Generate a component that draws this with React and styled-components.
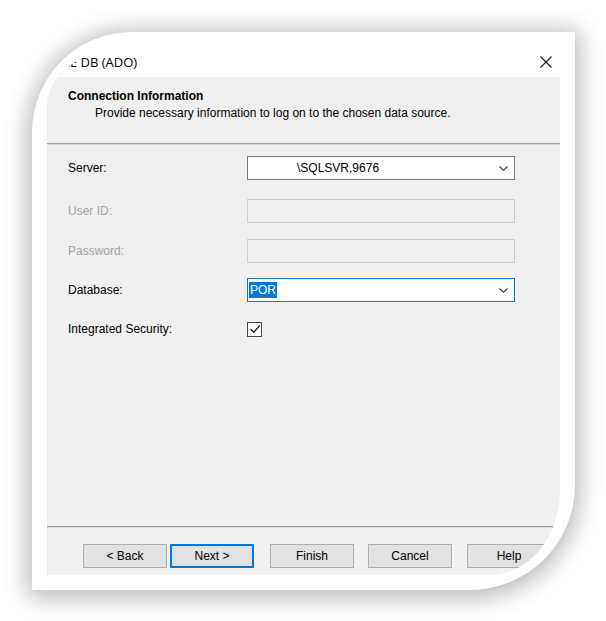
import React from 'react';
import styled, { createGlobalStyle } from 'styled-components';

const GlobalStyle = createGlobalStyle`
  html, body {
    margin: 0;
    padding: 0;
    background: #ffffff;
  }
  body {
    width: 606px;
    height: 621px;
    overflow: hidden;
    font-family: "Liberation Sans", Arial, sans-serif;
  }
`;

const App = () => {
  return (
    <>
      <GlobalStyle />
      <Frame>
        <Dialog>
          <TitleBar>
            <TitleText>OLE DB (ADO)</TitleText>
            <CloseIcon viewBox="0 0 12 12">
              <path d="M0.5 0.5 L11.5 11.5 M11.5 0.5 L0.5 11.5" stroke="#1a1a1a" strokeWidth="1.1" fill="none" />
            </CloseIcon>
          </TitleBar>

          {/* Wizard page header */}
          <Header>
            <HeaderTitle>Connection Information</HeaderTitle>
            <HeaderText>Provide necessary information to log on to the chosen data source.</HeaderText>
          </Header>
          <Separator />

          <Body>
            <Row gap={11}>
              <Label>Server:</Label>
              <Combo>
                <ComboValue indent={49}>\SQLSVR,9676</ComboValue>
                <Chevron />
              </Combo>
            </Row>
            <Row gap={19}>
              <Label disabled>User ID:</Label>
              <DisabledInput />
            </Row>
            <Row gap={16}>
              <Label disabled>Password:</Label>
              <DisabledInput />
            </Row>
            <Row gap={15}>
              <Label>Database:</Label>
              <Combo focused>
                <ComboValue indent={1}>
                  <Selected>POR</Selected>
                </ComboValue>
                <Chevron />
              </Combo>
            </Row>
            <Row gap={15}>
              <Label>Integrated Security:</Label>
              <CheckBox>
                <svg width="12" height="12" viewBox="0 0 12 12">
                  <path d="M1.5 6 L4.8 9.3 L10.8 2.5" stroke="#222" strokeWidth="1.3" fill="none" />
                </svg>
              </CheckBox>
            </Row>
          </Body>

          <Separator />
          <ButtonBar>
            <Button>&lt; Back</Button>
            <Button primary space={3}>Next &gt;</Button>
            <Button space={16}>Finish</Button>
            <Button space={14}>Cancel</Button>
            <Button space={15}>Help</Button>
          </ButtonBar>
        </Dialog>
      </Frame>
    </>
  );
};

const Chevron = () => (
  <ChevronIcon viewBox="0 0 9 5">
    <path d="M0.5 0.5 L4.5 4.3 L8.5 0.5" stroke="#333" strokeWidth="1.1" fill="none" />
  </ChevronIcon>
);

// Styled Components
const Frame = styled.div`
  box-sizing: border-box;
  width: 543px;
  height: 558px;
  margin: 32px 0 0 32px;
  padding: 13px 15px 15px 15px;
  display: flex;
  background: #ffffff;
  border-radius: 100px 0 105px 0;
  box-shadow: 0 3px 24px 4px rgba(0, 0, 0, 0.3);
`;

const Dialog = styled.div`
  flex: 1;
  display: flex;
  flex-direction: column;
  overflow: hidden;
  background: #f0f0f0;
  border-top-left-radius: 95px 60px;
  border-bottom-right-radius: 70px 85px;
`;

const TitleBar = styled.div`
  height: 32px;
  flex-shrink: 0;
  display: flex;
  align-items: center;
  justify-content: space-between;
  padding: 0 8px 0 6px;
  background: #ffffff;
`;

const TitleText = styled.span`
  font-family: "Open Sans", "Noto Sans", sans-serif;
  font-size: 13px;
  color: #000;
  padding-top: 2px;
`;

const CloseIcon = styled.svg`
  width: 12px;
  height: 12px;
  margin-top: 2px;
`;

const Header = styled.div`
  height: 66px;
  flex-shrink: 0;
  box-sizing: border-box;
  padding: 12px 0 0 21px;
  font-size: 12px;
  line-height: 14px;
  color: #000;
`;

const HeaderTitle = styled.div`
  font-weight: bold;
`;

const HeaderText = styled.div`
  margin: 3px 0 0 27px;
`;

const Separator = styled.div`
  height: 1px;
  flex-shrink: 0;
  background: #a0a0a0;
  border-bottom: 1px solid #d9d9d9;
`;

const Body = styled.div`
  flex: 1;
  padding-left: 21px;
`;

const Row = styled.div`
  display: grid;
  grid-template-columns: 179px 268px;
  align-items: center;
  height: 24px;
  margin-top: ${props => props.gap}px;
`;

const Label = styled.span`
  font-size: 12px;
  color: ${props => (props.disabled ? '#a2a2a2' : '#000')};
`;

const Combo = styled.div`
  box-sizing: border-box;
  height: 24px;
  display: flex;
  align-items: center;
  justify-content: space-between;
  padding-right: 6px;
  background: #ffffff;
  border: 1px solid ${props => (props.focused ? '#0078d7' : '#7a7a7a')};
`;

const ComboValue = styled.span`
  padding-left: ${props => props.indent}px;
  font-size: 12px;
  line-height: 16px;
  color: #000;
`;

const Selected = styled.span`
  display: inline-block;
  background: #0078d7;
  color: #fff;
  padding: 0 1px;
`;

const ChevronIcon = styled.svg`
  width: 9px;
  height: 5px;
`;

const DisabledInput = styled.div`
  box-sizing: border-box;
  height: 24px;
  background: #f0f0f0;
  border: 1px solid #cccccc;
`;

const CheckBox = styled.div`
  box-sizing: border-box;
  width: 15px;
  height: 15px;
  display: flex;
  align-items: center;
  justify-content: center;
  background: #ffffff;
  border: 1px solid #444444;
`;

const ButtonBar = styled.div`
  height: 47px;
  flex-shrink: 0;
  box-sizing: border-box;
  display: flex;
  align-items: flex-start;
  padding: 16px 0 0 36px;
`;

const Button = styled.div`
  box-sizing: border-box;
  width: 84px;
  height: 24px;
  flex-shrink: 0;
  margin-left: ${props => props.space || 0}px;
  display: flex;
  align-items: center;
  justify-content: center;
  font-size: 12px;
  color: #000;
  background: #e1e1e1;
  border: ${props => (props.primary ? '2px solid #0078d7' : '1px solid #adadad')};
`;

export default App;
